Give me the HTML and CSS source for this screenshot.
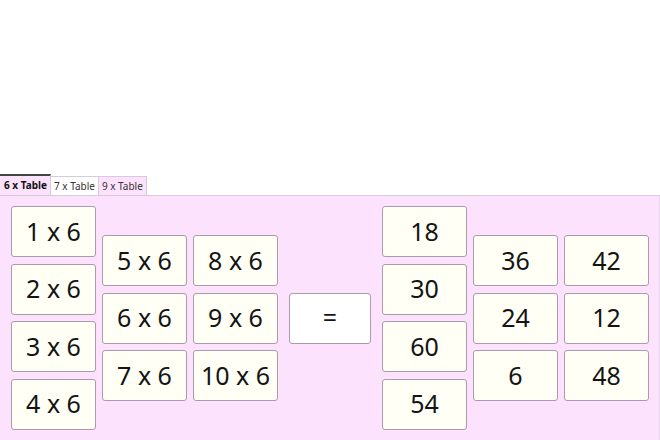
FILE: index.html
```html
<!DOCTYPE html>
<html>
<head>
<meta charset="utf-8">
<link rel="stylesheet" href="styles.css">
</head>
<body>
<div class="page">
  <div class="tabs">
    <div class="tab active">6 x Table</div>
    <div class="tab white">7 x Table</div>
    <div class="tab">9 x Table</div>
  </div>
  <div class="panel">
    <div class="col">
      <div class="card">1 x 6</div>
      <div class="card">2 x 6</div>
      <div class="card">3 x 6</div>
      <div class="card">4 x 6</div>
    </div>
    <div class="col">
      <div class="card">5 x 6</div>
      <div class="card">6 x 6</div>
      <div class="card">7 x 6</div>
    </div>
    <div class="col">
      <div class="card">8 x 6</div>
      <div class="card">9 x 6</div>
      <div class="card">10 x 6</div>
    </div>
    <div class="eq">=</div>
    <div class="col">
      <div class="card">18</div>
      <div class="card">30</div>
      <div class="card">60</div>
      <div class="card">54</div>
    </div>
    <div class="col">
      <div class="card">36</div>
      <div class="card">24</div>
      <div class="card">6</div>
    </div>
    <div class="col">
      <div class="card">42</div>
      <div class="card">12</div>
      <div class="card">48</div>
    </div>
  </div>
</div>
</body>
</html>
```

FILE: styles.css
```css
html, body {
  margin: 0;
  padding: 0;
  background: #ffffff;
}
.page {
  width: 660px;
  height: 440px;
  display: flex;
  flex-direction: column;
  font-family: "Noto Sans", "Open Sans", sans-serif;
  color: #141414;
}
.tabs {
  margin-top: 174px;
  height: 21px;
  display: flex;
  align-items: flex-end;
  border-bottom: 1px solid #d6cbdc;
}
.tab {
  height: 19px;
  box-sizing: border-box;
  padding: 0 3px;
  font-size: 10px;
  line-height: 18px;
  background: #fde2fd;
  border: 1px solid #d6cbdc;
  border-bottom: none;
  border-left: none;
  color: #333;
}
.tab.white {
  background: #ffffff;
}
.tab.active {
  height: 21px;
  padding: 0 3px 0 4px;
  font-weight: bold;
  color: #111;
  border-top: 2px solid #444;
  line-height: 18px;
}
.panel {
  flex: 1;
  background: #fde2fd;
  display: flex;
  align-items: center;
  padding: 0 0 0 11px;
  border-right: 1px solid #e6d6ec;
}
.col {
  display: flex;
  flex-direction: column;
  gap: 6.5px;
  margin-right: 6px;
}
.col:nth-child(3) {
  margin-right: 11px;
}
.card, .eq {
  width: 85px;
  height: 51px;
  box-sizing: border-box;
  background: #fffff6;
  border: 1px solid #a99ba9;
  border-radius: 3px;
  display: flex;
  align-items: center;
  justify-content: center;
  font-size: 25px;
  padding-bottom: 2px;
}
.eq {
  width: 82px;
  background: #ffffff;
  margin-right: 11px;
}
```
